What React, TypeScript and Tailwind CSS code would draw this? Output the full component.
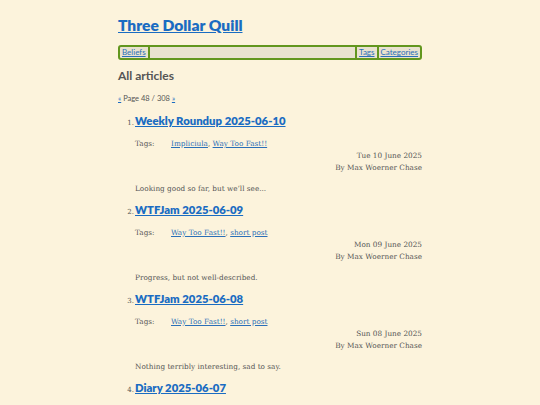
import React from "react";

type Post = {
  n: number;
  title: string;
  tags: string[];
  date: string;
  summary: string;
};

const posts: Post[] = [
  {
    n: 1,
    title: "Weekly Roundup 2025-06-10",
    tags: ["Impliciula", "Way Too Fast!!"],
    date: "Tue 10 June 2025",
    summary: "Looking good so far, but we\u2019ll see...",
  },
  {
    n: 2,
    title: "WTFJam 2025-06-09",
    tags: ["Way Too Fast!!", "short post"],
    date: "Mon 09 June 2025",
    summary: "Progress, but not well-described.",
  },
  {
    n: 3,
    title: "WTFJam 2025-06-08",
    tags: ["Way Too Fast!!", "short post"],
    date: "Sun 08 June 2025",
    summary: "Nothing terribly interesting, sad to say.",
  },
  {
    n: 4,
    title: "Diary 2025-06-07",
    tags: ["Diary"],
    date: "Sat 07 June 2025",
    summary: "",
  },
];

const sans = "font-['Lato',sans-serif]";
const slab = "font-['DejaVu_Serif',serif]";

export default function App() {
  return (
    <div className="h-[405px] overflow-hidden bg-[#fcf3dc] text-[#555555]">
      <div className="mx-auto w-[304px] pt-[15px]">
        <h1 className={`${sans} text-[15.6px] leading-[20px] font-extrabold`}>
          <a href="#" className="text-[#1a6cc2] underline">
            Three Dollar Quill
          </a>
        </h1>

        {/* nav bar */}
        <nav
          className={`${sans} mt-[10px] flex h-[15px] items-center rounded-[3px] border-2 border-[#62961e] bg-[#e9e2cf] text-[8px] leading-[11px]`}
        >
          <a href="#" className="px-[2px] text-[#2a6fb8] underline">
            Beliefs
          </a>
          <span className="h-full w-[2px] bg-[#62961e]" />
          <span className="flex-1" />
          <span className="h-full w-[2px] bg-[#62961e]" />
          <a href="#" className="px-[2px] text-[#2a6fb8] underline">
            Tags
          </a>
          <span className="h-full w-[2px] bg-[#62961e]" />
          <a href="#" className="px-[2px] text-[#2a6fb8] underline">
            Categories
          </a>
        </nav>

        <h2 className={`${sans} mt-[8px] text-[12px] leading-[16px] font-bold`}>
          All articles
        </h2>

        <div className={`${sans} mt-[9px] text-[7.5px] leading-[12px]`}>
          <a href="#" className="text-[#1a6cc2] underline">
            «
          </a>{" "}
          Page 48 / 308{" "}
          <a href="#" className="text-[#1a6cc2] underline">
            »
          </a>
        </div>

        <ol className="mt-[8px]">
          {posts.map((p) => (
            <li key={p.n} className="mb-[7px]">
              <div className="flex items-baseline">
                <span className={`${slab} w-[17px] pr-[1px] text-right text-[7px]`}>
                  {p.n}.
                </span>
                <a
                  href="#"
                  className={`${sans} text-[11.3px] leading-[16px] font-extrabold text-[#1a6cc2] underline`}
                >
                  {p.title}
                </a>
              </div>
              <div className={`${slab} pl-[17px] text-[7.3px] leading-[12px]`}>
                <div className="mt-[9px] flex">
                  <span className="w-[36px]">Tags:</span>
                  <span>
                    {p.tags.map((t, i) => (
                      <React.Fragment key={t}>
                        {i > 0 && ", "}
                        <a href="#" className="text-[#2a6fb8] underline">
                          {t}
                        </a>
                      </React.Fragment>
                    ))}
                  </span>
                </div>
                <div className="text-right">{p.date}</div>
                <div className="text-right">By Max Woerner Chase</div>
                <p className="mt-[9px]">{p.summary}</p>
              </div>
            </li>
          ))}
        </ol>
      </div>
    </div>
  );
}
